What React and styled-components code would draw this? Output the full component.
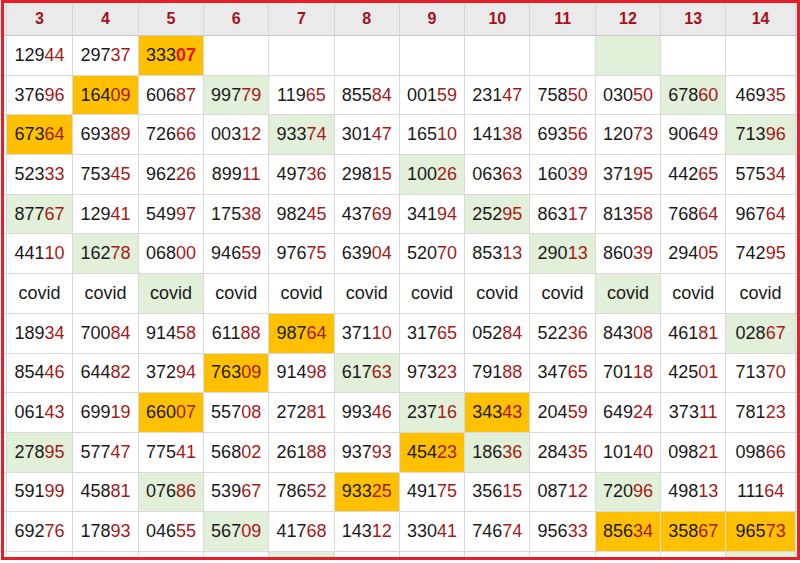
import React from 'react';
import styled, { createGlobalStyle, css } from 'styled-components';

const GlobalStyle = createGlobalStyle`
  html, body {
    margin: 0;
    padding: 0;
    background: #ffffff;
  }
  body {
    font-family: "Liberation Sans", Arial, sans-serif;
  }
`;

const Frame = styled.div`
  position: relative;
  width: 800px;
  height: 563px;
  overflow: hidden;
  background: #fff;
`;

const Viewport = styled.div`
  width: 800px;
  height: 557px;
  overflow: hidden;
`;

const Grid = styled.div`
  display: grid;
  grid-template-columns: 7px 66px 66px 65px repeat(8, 65.3px) 69.5px 20px;
  grid-template-rows: 36px repeat(13, 39.7px) 30px;
`;

const HeadCell = styled.div`
  display: flex;
  align-items: center;
  justify-content: center;
  padding-top: 3px;
  box-sizing: border-box;
  background: #eaeaea;
  border-right: 1px solid #d6d6d6;
  border-bottom: 1px solid #c8c8c8;
  color: #a3121c;
  font-size: 16px;
  font-weight: bold;
`;

const tones = {
  orange: '#ffc000',
  green: '#e2efd9',
  none: '#ffffff',
};

const Cell = styled.div`
  display: flex;
  align-items: center;
  justify-content: center;
  box-sizing: border-box;
  background: ${props => tones[props.$tone]};
  border-right: 1px solid #d9d9d9;
  border-bottom: 1px solid #d9d9d9;
  color: #1a1a1a;
  font-size: 18px;
  white-space: nowrap;
`;

const Tail = styled.span`
  color: #a51a1a;
  ${props => props.$hot && css`
    color: #e8121c;
    font-weight: bold;
  `}
`;

const Marker = styled.div`
  position: absolute;
  left: 1px;
  top: 0;
  width: 799px;
  height: 560px;
  box-sizing: border-box;
  border: 3px solid #e51e2a;
  pointer-events: none;
`;

const columns = [3, 4, 5, 6, 7, 8, 9, 10, 11, 12, 13, 14];

// o = orange, g = green, ! = bright tail, - = empty
const rows = [
  '12944 29737 33307o! - - - - - - -g - -',
  '37696 16409o 60687 99779g 11965 85584 00159 23147 75850 03050 67860g 46935',
  '67364o 69389 72666 00312 93374g 30147 16510 14138 69356 12073 90649 71396g',
  '52333 75345 96226 89911 49736 29815 10026g 06363 16039 37195 44265 57534',
  '87767g 12941 54997 17538 98245 43769 34194 25295g 86317 81358 76864 96764',
  '44110 16278g 06800 94659 97675 63904 52070 85313 29013g 86039 29405 74295',
  'covid covid covidg covid covid covid covid covid covid covidg covid covid',
  '18934 70084 91458 61188 98764o 37110 31765 05284 52236 84308 46181 02867g',
  '85446 64482 37294 76309o 91498 61763g 97323 79188 34765 70118 42501 71370',
  '06143 69919 66007o 55708 27281 99346 23716g 34343o 20459 64924 37311 78123',
  '27895g 57747 77541 56802 26188 93793 45423o 18636g 28435 10140 09821 09866',
  '59199 45881 07686g 53967 78652 93325o 49175 35615 08712 72096g 49813 11164',
  '69276 17893 04655 56709g 41768 14312 33041 74674 95633 85634o 35867o 96573o',
  '- - - - -g - - - - - - -g',
];

const parse = token => {
  let t = token;
  const hot = t.endsWith('!');
  if (hot) t = t.slice(0, -1);
  let tone = 'none';
  if (t.endsWith('o') && t !== 'o') { tone = 'orange'; t = t.slice(0, -1); }
  else if (t.endsWith('g')) { tone = 'green'; t = t.slice(0, -1); }
  if (t === '-') t = '';
  return { text: t, tone, hot };
};

const Value = ({ text, hot }) => {
  if (!/^\d+$/.test(text)) return text;
  return (
    <>
      {text.slice(0, -2)}
      <Tail $hot={hot}>{text.slice(-2)}</Tail>
    </>
  );
};

const App = () => (
  <Frame>
    <GlobalStyle />
    <Viewport>
      <Grid>
        <HeadCell />
        {columns.map(c => <HeadCell key={c}>{c}</HeadCell>)}
        <HeadCell />
        {rows.map((row, r) => {
          const cells = row.split(' ').map(parse);
          return (
            <React.Fragment key={r}>
              <Cell $tone="none" />
              {cells.map((cell, i) => (
                <Cell key={i} $tone={cell.tone}>
                  <Value text={cell.text} hot={cell.hot} />
                </Cell>
              ))}
              <Cell $tone="none" />
            </React.Fragment>
          );
        })}
      </Grid>
    </Viewport>
    <Marker />
  </Frame>
);

export default App;
